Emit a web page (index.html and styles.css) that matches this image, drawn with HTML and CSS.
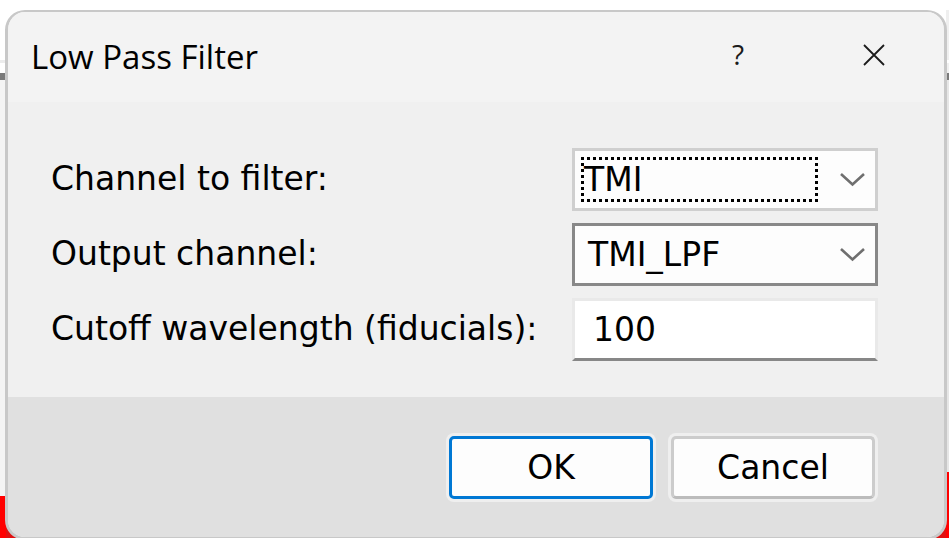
FILE: index.html
```html
<!DOCTYPE html>
<html lang="en">
<head>
<meta charset="utf-8">
<title>Low Pass Filter</title>
<link rel="stylesheet" href="styles.css">
</head>
<body>
<div class="dialog">
  <div class="titlebar">
    <div class="title">Low Pass Filter</div>
    <div class="tb-help">?</div>
    <div class="tb-close">
      <svg width="22" height="22" viewBox="0 0 22 22"><path d="M1 1 L21 21 M21 1 L1 21" stroke="#1b1b1b" stroke-width="1.8" fill="none"/></svg>
    </div>
  </div>
  <div class="content">
    <div class="label">Channel to filter:</div>
    <div class="combo combo-light">
      <div class="combo-value focus">TMI</div>
      <svg class="chev" width="27" height="15" viewBox="0 0 27 15"><polyline points="2,2 13.5,12.5 25,2" fill="none" stroke="#6f6f6f" stroke-width="2.6"/></svg>
    </div>
    <div class="label">Output channel:</div>
    <div class="combo combo-dark">
      <div class="combo-value plain">TMI_LPF</div>
      <svg class="chev" width="27" height="15" viewBox="0 0 27 15"><polyline points="2,2 13.5,12.5 25,2" fill="none" stroke="#6f6f6f" stroke-width="2.6"/></svg>
    </div>
    <div class="label">Cutoff wavelength (fiducials):</div>
    <div class="textbox">100</div>
  </div>
  <div class="footer">
    <div class="btn btn-default">OK</div>
    <div class="btn">Cancel</div>
  </div>
</div>
</body>
</html>
```
FILE: styles.css
```css
html, body {
  margin: 0;
  padding: 0;
}
body {
  width: 949px;
  height: 538px;
  overflow: hidden;
  background:
    linear-gradient(#fff 0 60px, #ececec 60px 63px, #fff 63px 73px, #7a7a7a 73px 80px, #f4f4f4 80px 496px, #ff0000 496px) left top / 6px 100% no-repeat,
    linear-gradient(#fff 0 10px, #efefef 10px 60px, #fff 60px 63px, #f0f0f0 63px 73px, #7a7a7a 73px 80px, #e6e6e6 80px 472px, #ff0000 472px) right top / 3px 100% no-repeat,
    linear-gradient(#fff 0 508px, #e01010 508px);
  font-family: "DejaVu Sans", Verdana, sans-serif;
  color: #000;
}
.dialog {
  box-sizing: border-box;
  margin: 10px 0 0 5px;
  width: 942px;
  height: 530px;
  border: 3px solid #c8c8c8;
  border-top-width: 2px;
  border-radius: 20px;
  overflow: hidden;
  background: #f0f0f0;
  display: flex;
  flex-direction: column;
}
.titlebar {
  height: 90px;
  background: #f3f3f3;
  display: flex;
  align-items: center;
  padding-left: 23px;
}
.title {
  font-family: "Open Sans", "Noto Sans", sans-serif;
  font-size: 33px;
  color: #000;
  flex: 1;
  margin-top: -2px;
}
.tb-help {
  width: 60px;
  text-align: center;
  font-family: "Open Sans", "Noto Sans", sans-serif;
  font-size: 28px;
  color: #1b1b1b;
  margin-top: -6px;
}
.tb-close {
  width: 60px;
  margin-left: 76px;
  margin-right: 40px;
  display: flex;
  justify-content: center;
  margin-top: -4px;
}
.content {
  height: 295px;
  box-sizing: border-box;
  padding: 46px 0 36px 43px;
  display: grid;
  grid-template-columns: 521px 306px;
  grid-auto-rows: 63px;
  row-gap: 12px;
  align-items: center;
  font-size: 33px;
}
.label {
  white-space: nowrap;
  margin-top: -3px;
}
.combo {
  box-sizing: border-box;
  height: 63px;
  background: #fdfdfd;
  border: 3px solid #cfcfcf;
  display: flex;
  align-items: center;
}
.combo-dark {
  border-color: #888888;
}
.combo-value {
  display: flex;
  align-items: center;
}
.combo-value.focus {
  box-sizing: border-box;
  margin-left: 6px;
  width: 237px;
  height: 45px;
  padding-left: 3px;
  background:
    repeating-linear-gradient(90deg, #000 0 3px, transparent 3px 6px) left top / 100% 3px no-repeat,
    repeating-linear-gradient(90deg, #000 0 3px, transparent 3px 6px) left bottom / 100% 3px no-repeat,
    repeating-linear-gradient(180deg, #000 0 3px, transparent 3px 6px) left top / 3px 100% no-repeat,
    repeating-linear-gradient(180deg, #000 0 3px, transparent 3px 6px) right top / 3px 100% no-repeat;
}
.combo-value.plain {
  padding-left: 13px;
}
.chev {
  margin-left: auto;
  margin-right: 9px;
  flex-shrink: 0;
}
.textbox {
  box-sizing: border-box;
  height: 63px;
  width: 306px;
  background: #fff;
  border: 3px solid #e9e9e9;
  border-bottom-color: #878787;
  padding-left: 18px;
  display: flex;
  align-items: center;
}
.footer {
  flex: 1;
  background: #e0e0e0;
  display: flex;
  justify-content: flex-end;
  align-items: flex-start;
  padding: 39px 69px 0 0;
  gap: 18px;
}
.btn {
  box-sizing: border-box;
  width: 204px;
  height: 63px;
  background: #fdfdfd;
  border: 3px solid #cccccc;
  border-bottom-color: #bcbcbc;
  border-radius: 5px;
  box-shadow: 0 0 0 3px #efefef;
  display: flex;
  align-items: center;
  justify-content: center;
  font-size: 33px;
}
.btn-default {
  border-color: #0078d4;
}
```
